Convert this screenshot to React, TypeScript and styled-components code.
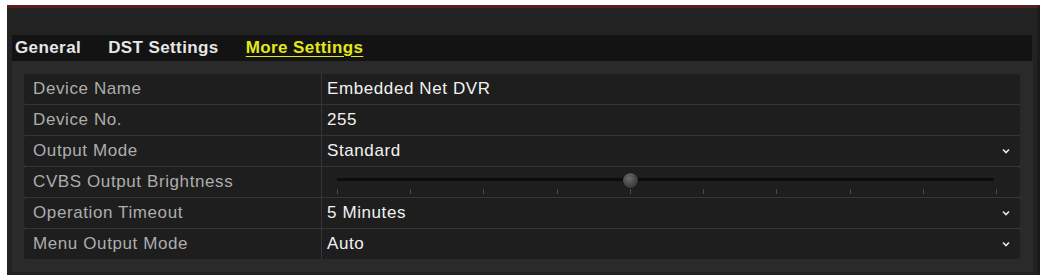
import React from "react";
import styled, { createGlobalStyle } from "styled-components";

const Global = createGlobalStyle`
  html, body { margin: 0; padding: 0; background: #ffffff; }
  body { font-family: "Liberation Sans", Arial, sans-serif; }
`;

const Window = styled.div`
  margin: 5px 0 0 7px;
  width: 1033px;
  height: 270px;
  box-sizing: border-box;
  background: #222222;
  border-top: 3px solid #5a1d1d;
  border-right: 3px solid #1a1a1a;
  padding: 27px 4px 3px 5px;
  display: flex;
  flex-direction: column;
`;

const TabBar = styled.div`
  height: 26px;
  margin-right: 1px;
  background: #131313;
  display: flex;
  align-items: center;
  padding-left: 3px;
  gap: 27px;
`;

const Tab = styled.span<{ $active?: boolean }>`
  font-size: 17px;
  font-weight: bold;
  color: ${(p) => (p.$active ? "#e4e81a" : "#e6e6e6")};
  text-decoration: ${(p) => (p.$active ? "underline" : "none")};
  text-underline-offset: 3px;
  letter-spacing: 0.4px;
  line-height: 26px;
`;

const Panel = styled.div`
  flex: 1;
  background: #2a2a2a;
  padding: 13px 13px 0 12px;
`;

const Table = styled.div`
  display: flex;
  flex-direction: column;
  gap: 1px;
  background: #343434;
`;

const Row = styled.div`
  height: 30px;
  display: flex;
  background: #1e1e1e;
  border-radius: 2px;
`;

const Label = styled.div`
  width: 298px;
  border-right: 1px solid #353535;
  padding-left: 9px;
  box-sizing: border-box;
  display: flex;
  align-items: center;
  font-size: 17px;
  letter-spacing: 0.6px;
  color: #adadad;
`;

const Value = styled.div`
  flex: 1;
  display: flex;
  align-items: center;
  padding-left: 5px;
  padding-right: 10px;
  font-size: 17px;
  letter-spacing: 0.6px;
  color: #f2f2f2;
  position: relative;
`;

const ValueText = styled.span`
  flex: 1;
`;

const Chevron = styled.svg`
  width: 8px;
  height: 6px;
  flex: none;
`;

const SliderBox = styled.div`
  position: relative;
  margin-left: 10px;
  width: 659px;
  height: 30px;
`;

const Track = styled.div`
  position: absolute;
  left: 0;
  right: 2px;
  top: 11px;
  height: 3px;
  background: #0c0c0c;
  border-radius: 2px;
`;

const Tick = styled.div`
  position: absolute;
  top: 22px;
  width: 1px;
  height: 5px;
  background: #4a4a4a;
`;

const Knob = styled.div`
  position: absolute;
  top: 6px;
  width: 15px;
  height: 15px;
  margin-left: -7px;
  border-radius: 50%;
  background: radial-gradient(circle at 40% 35%, #6a6a6a, #3a3a3a 70%);
  box-shadow: 0 0 1px #000;
`;

const ChevronIcon = () => (
  <Chevron viewBox="0 0 8 6">
    <path d="M1 1.5 L4 4.5 L7 1.5" stroke="#e8e8e8" strokeWidth="1.6" fill="none" />
  </Chevron>
);

const Slider = ({ ticks, index }: { ticks: number; index: number }) => {
  const step = 659 / (ticks - 1);
  return (
    <SliderBox>
      <Track />
      {Array.from({ length: ticks }).map((_, i) => (
        <Tick key={i} style={{ left: Math.round(i * step) }} />
      ))}
      <Knob style={{ left: Math.round(index * step) }} />
    </SliderBox>
  );
};

type RowDef = { label: string; value?: string; dropdown?: boolean; slider?: boolean };

const rows: RowDef[] = [
  { label: "Device Name", value: "Embedded Net DVR" },
  { label: "Device No.", value: "255" },
  { label: "Output Mode", value: "Standard", dropdown: true },
  { label: "CVBS Output Brightness", slider: true },
  { label: "Operation Timeout", value: "5 Minutes", dropdown: true },
  { label: "Menu Output Mode", value: "Auto", dropdown: true },
];

export default function App() {
  return (
    <>
      <Global />
      <Window>
        <TabBar>
          <Tab>General</Tab>
          <Tab>DST Settings</Tab>
          <Tab $active>More Settings</Tab>
        </TabBar>
        <Panel>
          <Table>
            {rows.map((r) => (
              <Row key={r.label}>
                <Label>{r.label}</Label>
                <Value>
                  {r.slider ? (
                    <Slider ticks={10} index={4} />
                  ) : (
                    <ValueText>{r.value}</ValueText>
                  )}
                  {r.dropdown && <ChevronIcon />}
                </Value>
              </Row>
            ))}
          </Table>
        </Panel>
      </Window>
    </>
  );
}
